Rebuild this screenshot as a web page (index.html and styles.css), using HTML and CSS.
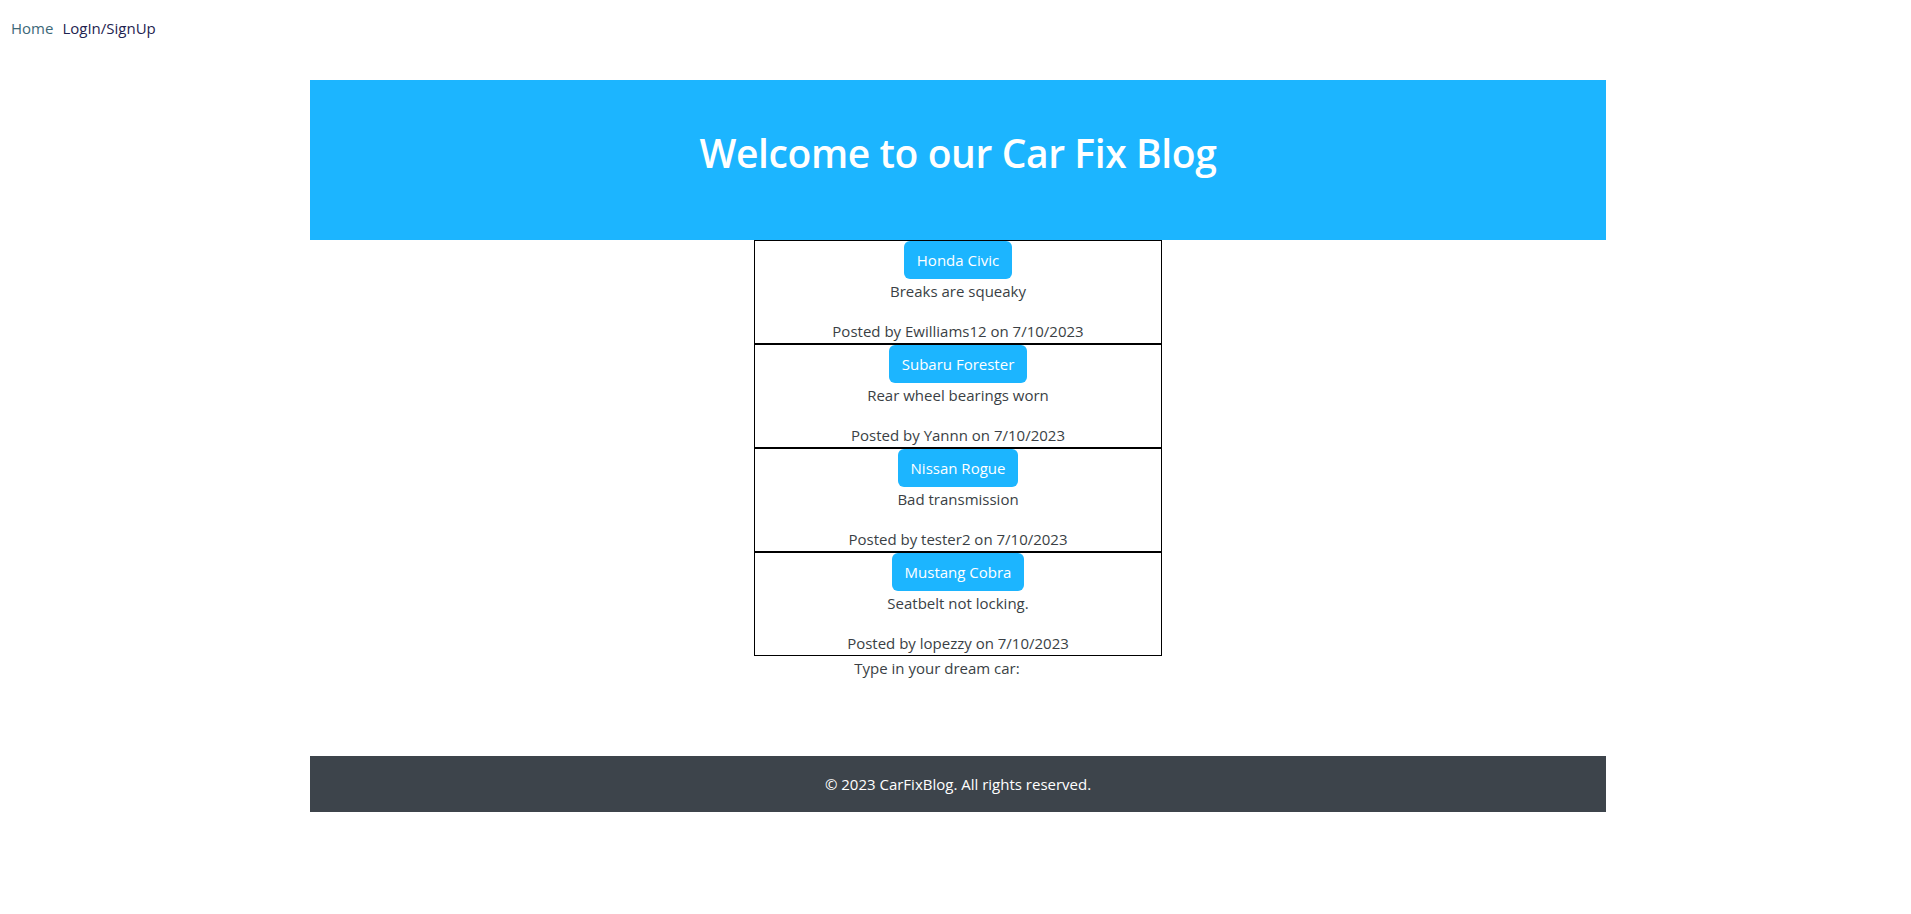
FILE: index.html
```html
<!DOCTYPE html>
<html lang="en">
<head>
<meta charset="utf-8">
<title>Car Fix Blog</title>
<link rel="stylesheet" href="styles.css">
</head>
<body>
<nav class="topnav">
  <a class="navlink navlink-home" href="#">Home</a>
  <a class="navlink navlink-login" href="#">LogIn/SignUp</a>
</nav>
<div class="page">
  <header class="hero">
    <h1 class="hero-title">Welcome to our Car Fix Blog</h1>
  </header>
  <main class="posts">
    <article class="post">
      <a class="post-btn" href="#">Honda Civic</a>
      <p class="post-desc">Breaks are squeaky</p>
      <p class="post-meta">Posted by Ewilliams12 on 7/10/2023</p>
    </article>
    <article class="post">
      <a class="post-btn" href="#">Subaru Forester</a>
      <p class="post-desc">Rear wheel bearings worn</p>
      <p class="post-meta">Posted by Yannn on 7/10/2023</p>
    </article>
    <article class="post">
      <a class="post-btn" href="#">Nissan Rogue</a>
      <p class="post-desc">Bad transmission</p>
      <p class="post-meta">Posted by tester2 on 7/10/2023</p>
    </article>
    <article class="post">
      <a class="post-btn" href="#">Mustang Cobra</a>
      <p class="post-desc">Seatbelt not locking.</p>
      <p class="post-meta">Posted by lopezzy on 7/10/2023</p>
    </article>
    <div class="dream">
      <label class="dream-label">Type in your dream car:</label>
    </div>
  </main>
  <footer class="footer">
    <p class="footer-text">© 2023 CarFixBlog. All rights reserved.</p>
  </footer>
</div>
</body>
</html>
```

FILE: styles.css
```css
* { box-sizing: border-box; }

body {
  margin: 0;
  font-family: "Open Sans", "Noto Sans", sans-serif;
  font-size: 15px;
  line-height: 24px;
  color: #3a3f45;
  background: #fff;
}

.topnav {
  display: flex;
  gap: 9px;
  padding: 16px 11px 0;
  height: 40px;
}

.navlink {
  text-decoration: none;
  font-size: 15px;
  line-height: 24px;
}

.navlink-home { color: #3d6878; }
.navlink-login { color: #1e2350; }

.page {
  padding-left: 5px;
}

.hero {
  width: 1296px;
  height: 160px;
  margin: 40px auto 0;
  background: #1cb5ff;
  display: flex;
  align-items: center;
  justify-content: center;
  padding-bottom: 14px;
}

.hero-title {
  margin: 0;
  color: #fff;
  font-size: 39px;
  line-height: 48px;
  font-weight: 600;
  letter-spacing: -0.4px;
}

.posts {
  width: 408px;
  margin: 0 auto;
}

.post {
  border: 1px solid #000;
  text-align: center;
  height: 104px;
}

.post-btn {
  display: inline-block;
  padding: 6px 12px;
  border: 1px solid transparent;
  border-radius: 6px;
  background: #1cb5ff;
  color: #fff;
  text-decoration: none;
  font-size: 15px;
  line-height: 24px;
}

.post-desc {
  margin: 0 0 16px;
}

.post-meta {
  margin: 0;
}

.dream {
  text-align: center;
  padding-right: 42px;
}

.dream-label {
  line-height: 24px;
}

.footer {
  width: 1296px;
  height: 56px;
  margin: 76px auto 0;
  background: #3d444b;
  display: flex;
  align-items: center;
  justify-content: center;
}

.footer-text {
  margin: 0;
  color: #fff;
  font-size: 15px;
  line-height: 24px;
}
```
